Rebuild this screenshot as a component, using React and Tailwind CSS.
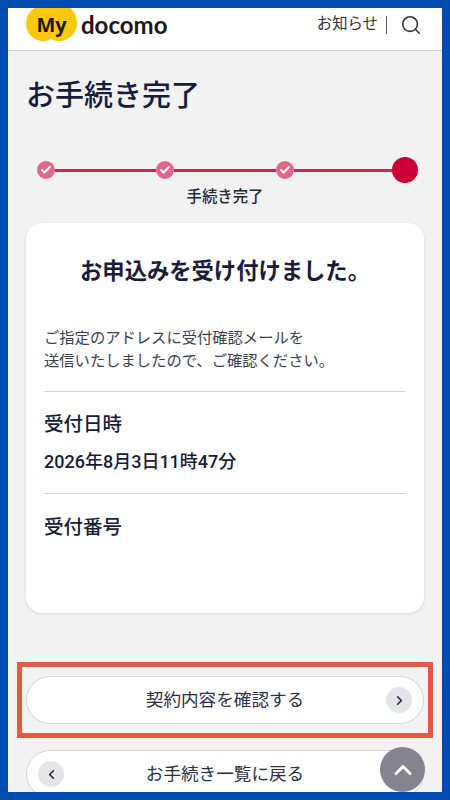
import React from 'react';
import { Check, ChevronLeft, ChevronRight, ChevronUp, Search } from 'lucide-react';

const jp = { fontFamily: 'Roboto, "Noto Sans CJK JP", "Noto Sans", sans-serif' };

const StepDot = () => (
  <div className="w-[18px] h-[18px] rounded-full bg-[#e0678a] flex items-center justify-center shrink-0">
    <Check size={12} strokeWidth={4} className="text-white" />
  </div>
);

const App = () => {
  return (
    <div className="relative w-[450px] h-[800px] bg-[#004bb1] p-2 overflow-hidden" style={jp}>
      <div className="h-[784px] bg-[#f2f2f3] overflow-hidden flex flex-col">

        {/* Header */}
        <div className="h-[43px] shrink-0 bg-white border-b border-[#cfcfd2] flex items-start justify-between pl-[18px] pr-[20px]">
          <div className="flex items-center h-[33px] overflow-hidden">
            <div className="relative w-[51px] h-[33px]">
              <div className="absolute left-0 top-[-2px] w-[34px] h-[35px] rounded-full bg-[#fdc80d]" />
              <div className="absolute right-0 top-[-4px] w-[36px] h-[37px] rounded-full bg-[#fdc80d]" />
              <span className="absolute inset-0 flex items-center justify-center text-[20px] font-bold text-[#231815] font-['Open_Sans']">My</span>
            </div>
            <span className="ml-[4px] text-[24px] leading-none font-bold text-[#231815] font-['Lato']">docomo</span>
          </div>
          <div className="flex items-center h-[33px] text-[#333338]">
            <span className="text-[15.4px] leading-none">お知らせ</span>
            <div className="w-px h-[18px] bg-[#55555a] ml-[8px] mr-[13px]" />
            <Search size={22} strokeWidth={1.75} />
          </div>
        </div>

        {/* Title */}
        <h1 className="mt-[27px] ml-[18px] text-[29px] leading-[36px] font-medium text-[#171c3a]">お手続き完了</h1>

        {/* Steps */}
        <div className="mt-[43px] ml-[29px] mr-[24px] flex items-center h-[26px]">
          <StepDot />
          <div className="w-[101px] h-[3px] bg-[#c9254f]" />
          <StepDot />
          <div className="w-[102px] h-[3px] bg-[#c9254f]" />
          <StepDot />
          <div className="flex-1 h-[3px] bg-[#c9254f]" />
          <div className="w-[26px] h-[26px] rounded-full bg-[#cc0033] shrink-0" />
        </div>
        <p className="mt-[4px] text-center text-[15.4px] leading-[20px] font-medium text-[#232840]">手続き完了</p>

        {/* Card */}
        <div className="mt-[16px] mx-[18px] h-[390px] shrink-0 bg-white rounded-[16px] shadow-[0_1px_3px_rgba(0,0,0,0.12)] px-[18px] pt-[33px]">
          <h2 className="text-center text-[22.3px] leading-[30px] font-bold text-[#171c3a] -mx-[18px]">お申込みを受け付けました。</h2>
          <p className="mt-[41px] text-[15.3px] leading-[23px] text-[#3a3e52]">
            ご指定のアドレスに受付確認メールを
            <br />
            送信いたしましたので、ご確認ください。
          </p>
          <div className="mt-[18px] border-t border-[#d6d6d9]" />
          <p className="mt-[20px] text-[19.5px] leading-[26px] font-medium text-[#171c3a]">受付日時</p>
          <p className="mt-[12px] text-[18px] leading-[24px] font-medium text-[#171c3a]">2026年8月3日11時47分</p>
          <div className="mt-[19px] border-t border-[#d6d6d9]" />
          <p className="mt-[21px] text-[19.5px] leading-[26px] font-medium text-[#171c3a]">受付番号</p>
        </div>

        {/* Buttons */}
        <div className="mt-[49px] mx-[9px] h-[76px] shrink-0 border-[5px] border-[#e25a45] flex items-center px-[4px]">
          <div className="w-full h-[48px] bg-white rounded-full border border-[#d3d3da] flex items-center relative justify-center">
            <span className="text-[17.6px] text-[#2c3045]">契約内容を確認する</span>
            <div className="absolute right-[11px] w-[26px] h-[26px] rounded-full bg-[#e3e5ea] flex items-center justify-center">
              <ChevronRight size={15} strokeWidth={2.5} className="text-[#20243a]" />
            </div>
          </div>
        </div>

        <div className="mt-[12px] mx-[18px] h-[48px] shrink-0 bg-white rounded-full border border-[#d3d3da] flex items-center relative justify-center">
          <span className="text-[17.6px] text-[#2c3045]">お手続き一覧に戻る</span>
          <div className="absolute left-[11px] w-[26px] h-[26px] rounded-full bg-[#e3e5ea] flex items-center justify-center">
            <ChevronLeft size={15} strokeWidth={2.5} className="text-[#20243a]" />
          </div>
        </div>
      </div>

      {/* Scroll to top */}
      <div className="absolute left-[380px] top-[747px] w-[45px] h-[45px] rounded-full bg-[#83848f] flex items-center justify-center">
        <ChevronUp size={28} strokeWidth={2.5} className="text-white" />
      </div>
    </div>
  );
};

export default App;
